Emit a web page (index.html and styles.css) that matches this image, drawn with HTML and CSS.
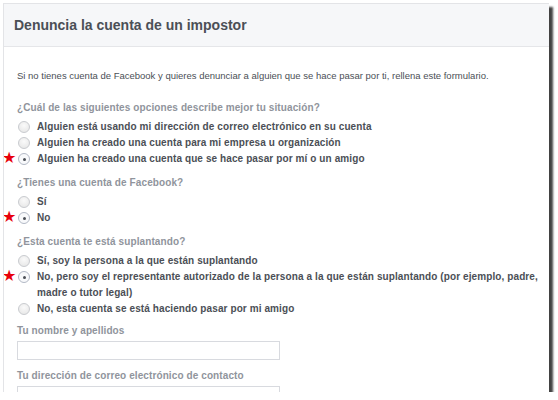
FILE: index.html
```html
<!DOCTYPE html>
<html lang="es">
<head>
<meta charset="utf-8">
<link rel="stylesheet" href="styles.css">
</head>
<body>
<div class="card">
  <div class="header"><h1 class="title">Denuncia la cuenta de un impostor</h1></div>
  <div class="content">
    <p class="intro">Si no tienes cuenta de Facebook y quieres denunciar a alguien que se hace pasar por ti, rellena este formulario.</p>

    <div class="question">¿Cuál de las siguientes opciones describe mejor tu situación?</div>
    <div class="options">
      <label class="option"><span class="radio"></span><span class="otext">Alguien está usando mi dirección de correo electrónico en su cuenta</span></label>
      <label class="option"><span class="radio"></span><span class="otext">Alguien ha creado una cuenta para mi empresa u organización</span></label>
      <label class="option"><span class="star">★</span><span class="radio checked"></span><span class="otext">Alguien ha creado una cuenta que se hace pasar por mí o un amigo</span></label>
    </div>

    <div class="question">¿Tienes una cuenta de Facebook?</div>
    <div class="options">
      <label class="option"><span class="radio"></span><span class="otext">Sí</span></label>
      <label class="option"><span class="star">★</span><span class="radio checked"></span><span class="otext">No</span></label>
    </div>

    <div class="question">¿Esta cuenta te está suplantando?</div>
    <div class="options options-last">
      <label class="option"><span class="radio"></span><span class="otext">Sí, soy la persona a la que están suplantando</span></label>
      <label class="option"><span class="star">★</span><span class="radio checked"></span><span class="otext">No, pero soy el representante autorizado de la persona a la que están suplantando (por ejemplo, padre, madre o tutor legal)</span></label>
      <label class="option"><span class="radio"></span><span class="otext">No, esta cuenta se está haciendo pasar por mi amigo</span></label>
    </div>

    <div class="field-label">Tu nombre y apellidos</div>
    <div class="input"></div>
    <div class="field-label">Tu dirección de correo electrónico de contacto</div>
    <div class="input"></div>
  </div>
</div>
</body>
</html>
```

FILE: styles.css
```css
html, body {
  margin: 0;
  padding: 0;
  background: #ffffff;
}
body {
  font-family: "Liberation Sans", Arial, sans-serif;
  color: #4b4f56;
}
.card {
  position: relative;
  margin: 3px 0 0 3px;
  width: 546px;
  height: 389px;
  border: 1px solid #e3e4e7;
  border-right: none;
  border-bottom: none;
  box-sizing: border-box;
  background: #ffffff;
  box-shadow: 4px 4px 2px rgba(45, 45, 45, 0.9);
  overflow: hidden;
}
.header {
  height: 42px;
  background: #f6f7f9;
  border-bottom: 1px solid #e5e6e9;
  display: flex;
  align-items: center;
  padding-left: 10px;
}
.title {
  margin: 0;
  font-size: 14px;
  font-weight: bold;
  color: #4b4f56;
}
.content {
  padding: 23px 0 0 13px;
}
.intro {
  margin: 0 0 21px;
  font-size: 9.5px;
  color: #4b4f56;
}
.question {
  font-size: 10px;
  font-weight: bold;
  color: #90949c;
  margin-bottom: 6px;
  letter-spacing: 0.1px;
}
.options {
  display: flex;
  flex-direction: column;
  margin-bottom: 10px;
}
.options-last {
  margin-bottom: 8px;
}
.option {
  position: relative;
  display: flex;
  align-items: flex-start;
  font-size: 10px;
  font-weight: bold;
  line-height: 16px;
  color: #4b4f56;
  letter-spacing: 0.1px;
}
.radio {
  flex: none;
  width: 12px;
  height: 12px;
  margin: 2px 7px 0 1px;
  border-radius: 50%;
  border: 1px solid #c9cbcf;
  background: radial-gradient(circle at 50% 35%, #fafafa, #e4e4e4);
  box-sizing: border-box;
  position: relative;
}
.radio.checked {
  background: #f8f9fb;
  border-color: #b3b9c6;
}
.radio.checked::after {
  content: "";
  position: absolute;
  left: 3.5px;
  top: 3.5px;
  width: 3px;
  height: 3px;
  border-radius: 50%;
  background: #4b4f56;
}
.otext {
  flex: 1;
  padding-right: 4px;
}
.star {
  position: absolute;
  left: -15px;
  top: -1px;
  color: #e8000a;
  font-size: 16px;
  line-height: 16px;
  font-family: "DejaVu Sans", sans-serif;
}
.field-label {
  font-size: 10px;
  font-weight: bold;
  color: #90949c;
  margin: 0 0 5px;
  letter-spacing: 0.1px;
}
.input {
  width: 263px;
  height: 19px;
  border: 1px solid #d8dadf;
  box-sizing: border-box;
  margin-bottom: 10px;
}
```
